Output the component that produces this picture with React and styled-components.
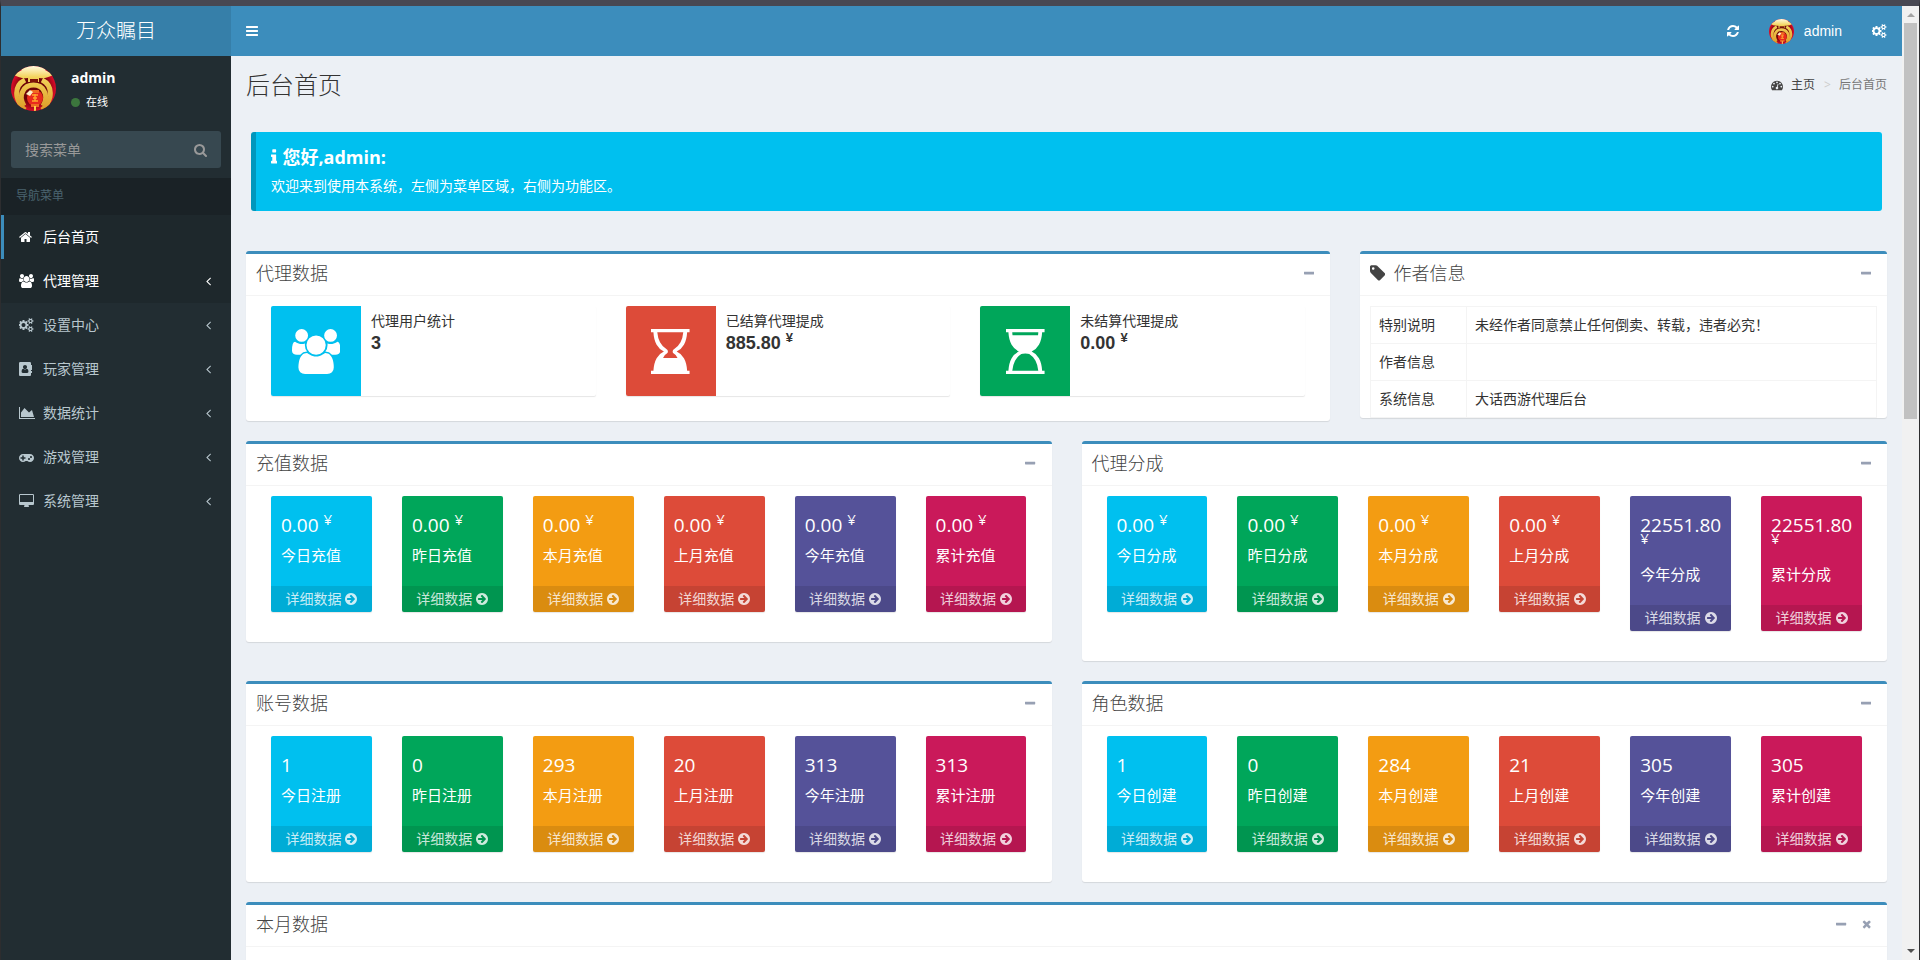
import React from 'react';
import styled, { createGlobalStyle, css } from 'styled-components';

const GlobalStyle = createGlobalStyle`
  * {
    box-sizing: border-box;
  }
  body {
    margin: 0;
    background: #222d32;
    color: #333333;
    font-family: 'Open Sans', 'Noto Sans CJK SC', sans-serif;
    font-size: 14px;
    line-height: 20px;
  }
  h1, h3, h4, p, ul, ol {
    margin: 0;
    padding: 0;
    font-weight: 400;
  }
  a {
    color: inherit;
    text-decoration: none;
  }
  button {
    padding: 0;
    border: 0;
    background: none;
    color: inherit;
    font: inherit;
    cursor: pointer;
  }
`;

const colors = {
  aqua: '#00c0ef',
  green: '#00a65a',
  yellow: '#f39c12',
  red: '#dd4b39',
  purple: '#555299',
  maroon: '#ca195a',
};

/* name: [left edge, width, path], all on a 1792 high canvas */
const glyphs = {
  bars: [
    128,
    1536,
    'M1664 1344v128q0 26-19 45t-45 19h-1408q-26 0-45-19t-19-45v-128q0-26 19-45t45-19h1408q26 0 45 19t19 45zm0-512v128q0 26-19 45t-45 19h-1408q-26 0-45-19t-19-45v-128q0-26 19-45t45-19h1408q26 0 45 19t19 45zm0-512v128q0 26-19 45t-45 19h-1408q-26 0-45-19t-19-45v-128q0-26 19-45t45-19h1408q26 0 45 19t19 45z',
  ],
  refresh: [
    128,
    1536,
    'M1639 1056q0 5-1 7-64 268-268 434.5t-478 166.5q-146 0-282.5-55t-243.5-157l-129 129q-19 19-45 19t-45-19-19-45v-448q0-26 19-45t45-19h448q26 0 45 19t19 45-19 45l-137 137q71 66 161 102t187 36q134 0 250-65t186-179q11-17 53-117 8-23 30-23h192q13 0 22.5 9.5t9.5 22.5zm25-800v448q0 26-19 45t-45 19h-448q-26 0-45-19t-19-45 19-45l138-138q-148-137-349-137-134 0-250 65t-186 179q-11 17-53 117-8 23-30 23h-199q-13 0-22.5-9.5t-9.5-22.5v-7q65-268 270-434.5t480-166.5q146 0 284 55.5t245 156.5l130-129q19-19 45-19t45 19 19 45z',
  ],
  search: [
    64,
    1664,
    'M1216 832q0-185-131.5-316.5t-316.5-131.5-316.5 131.5-131.5 316.5 131.5 316.5 316.5 131.5 316.5-131.5 131.5-316.5zm512 832q0 52-38 90t-90 38q-54 0-90-38l-343-342q-179 124-399 124-143 0-273.5-55.5t-225-150-150-225-55.5-273.5 55.5-273.5 150-225 225-150 273.5-55.5 273.5 55.5 225 150 150 225 55.5 273.5q0 220-124 399l343 343q37 37 37 90z',
  ],
  home: [
    64,
    1664,
    'M1472 992v480q0 26-19 45t-45 19h-384v-384h-256v384h-384q-26 0-45-19t-19-45v-480q0-1 .5-3t.5-3l575-474 575 474q1 2 1 6zm223-69l-62 74q-8 9-21 11h-3q-13 0-21-7l-692-577-692 577q-12 8-24 7-13-2-21-11l-62-74q-8-10-7-23.5t11-21.5l719-599q32-26 76-26t76 26l244 204v-195q0-14 9-23t23-9h192q14 0 23 9t9 23v408l219 182q10 8 11 21.5t-7 23.5z',
  ],
  users: [
    64,
    1920,
    'M657 896q-162 5-265 128h-134q-82 0-138-40.5t-56-118.5q0-353 124-353 6 0 43.5 21t97.5 42.5 119 21.5q67 0 133-23-5 37-5 66 0 159 90 256zm1071 637q0 120-73 189.5t-194 69.5h-874q-121 0-194-69.5t-73-189.5q0-53 3.5-103.5t14-109 26.5-108.5 43-97.5 62-81 85.5-53.5 111.5-20q10 0 43 21.5t73 48 107 48 135 21.5 135-21.5 107-48 73-48 43-21.5q61 0 111.5 20t85.5 53.5 62 81 43 97.5 26.5 108.5 14 109 3.5 103.5zm-1024-1277q0 106-75 181t-181 75-181-75-75-181 75-181 181-75 181 75 75 181zm704 384q0 159-112.5 271.5t-271.5 112.5-271.5-112.5-112.5-271.5 112.5-271.5 271.5-112.5 271.5 112.5 112.5 271.5zm576 225q0 78-56 118.5t-138 40.5h-134q-103-123-265-128 90-97 90-256 0-29-5-66 66 23 133 23 59 0 119-21.5t97.5-42.5 43.5-21q124 0 124 353zm-128-609q0 106-75 181t-181 75-181-75-75-181 75-181 181-75 181 75 75 181z',
  ],
  cogs: [
    0,
    1920,
    'M832 896q0-106-75-181t-181-75-181 75-75 181 75 181 181 75 181-75 75-181zm768 512q0-52-38-90t-90-38-90 38-38 90q0 53 37.5 90.5t90.5 37.5 90.5-37.5 37.5-90.5zm0-1024q0-52-38-90t-90-38-90 38-38 90q0 53 37.5 90.5t90.5 37.5 90.5-37.5 37.5-90.5zm-384 421v185q0 10-7 19.5t-16 10.5l-155 24q-11 35-32 76 34 48 90 115 7 11 7 20 0 12-7 19-23 30-82.5 89.5t-78.5 59.5q-11 0-21-7l-115-90q-37 19-77 31-11 108-23 155-7 24-30 24h-186q-11 0-20-7.5t-10-17.5l-23-153q-34-10-75-31l-118 89q-7 7-20 7-11 0-21-8-144-133-144-160 0-9 7-19 10-14 41-53t47-61q-23-44-35-82l-152-24q-10-1-17-9.5t-7-19.5v-185q0-10 7-19.5t16-10.5l155-24q11-35 32-76-34-48-90-115-7-11-7-20 0-12 7-20 22-30 82-89t79-59q11 0 21 7l115 90q34-18 77-32 11-108 23-154 7-24 30-24h186q11 0 20 7.5t10 17.5l23 153q34 10 75 31l118-89q8-7 20-7 11 0 21 8 144 133 144 160 0 8-7 19-12 16-42 54t-45 60q23 48 34 82l152 23q10 2 17 10.5t7 19.5zm640 533v140q0 16-149 31-12 27-30 52 51 113 51 138 0 4-4 7-122 71-124 71-8 0-46-47t-52-68q-20 2-30 2t-30-2q-14 21-52 68t-46 47q-2 0-124-71-4-3-4-7 0-25 51-138-18-25-30-52-149-15-149-31v-140q0-16 149-31 13-29 30-52-51-113-51-138 0-4 4-7 4-2 35-20t59-34 30-16q8 0 46 46.5t52 67.5q20-2 30-2t30 2q51-71 92-112l6-2q4 0 124 70 4 3 4 7 0 25-51 138 17 23 30 52 149 15 149 31zm0-1024v140q0 16-149 31-12 27-30 52 51 113 51 138 0 4-4 7-122 71-124 71-8 0-46-47t-52-68q-20 2-30 2t-30-2q-14 21-52 68t-46 47q-2 0-124-71-4-3-4-7 0-25 51-138-18-25-30-52-149-15-149-31v-140q0-16 149-31 13-29 30-52-51-113-51-138 0-4 4-7 4-2 35-20t59-34 30-16q8 0 46 46.5t52 67.5q20-2 30-2t30 2q51-71 92-112l6-2q4 0 124 70 4 3 4 7 0 25-51 138 17 23 30 52 149 15 149 31z',
  ],
  book: [
    0,
    1792,
    'M1028 644q0 107-76.5 183t-183.5 76-183.5-76-76.5-183q0-108 76.5-184t183.5-76 183.5 76 76.5 184zm-48 220q46 0 82.5 17t60 47.5 39.5 67 24 81 11.5 82.5 3.5 79q0 67-39.5 118.5t-105.5 51.5h-576q-66 0-105.5-51.5t-39.5-118.5q0-48 4.5-93.5t18.5-98.5 36.5-91.5 63-64.5 93.5-26h5q7 4 32 19.5t35.5 21 33 17 37 16 35 9 39.5 4.5 39.5-4.5 35-9 37-16 33-17 35.5-21 32-19.5zm684-256q0 13-9.5 22.5t-22.5 9.5h-96v128h96q13 0 22.5 9.5t9.5 22.5v192q0 13-9.5 22.5t-22.5 9.5h-96v128h96q13 0 22.5 9.5t9.5 22.5v192q0 13-9.5 22.5t-22.5 9.5h-96v224q0 66-47 113t-113 47h-1216q-66 0-113-47t-47-113v-1472q0-66 47-113t113-47h1216q66 0 113 47t47 113v224h96q13 0 22.5 9.5t9.5 22.5v192q0 13-9.5 22.5t-22.5 9.5h-96v128h96q13 0 22.5 9.5t9.5 22.5z',
  ],
  chart: [0, 2048, 'M2048 1536v128h-2048v-1536h128v1408h1920zm-384-1024l256 896h-1664v-576l448-576 576 576z'],
  gamepad: [
    0,
    1920,
    'M832 1088v-128q0-14-9-23t-23-9h-192v-192q0-14-9-23t-23-9h-128q-14 0-23 9t-9 23v192h-192q-14 0-23 9t-9 23v128q0 14 9 23t23 9h192v192q0 14 9 23t23 9h128q14 0 23-9t9-23v-192h192q14 0 23-9t9-23zm576 64q0-53-37.5-90.5t-90.5-37.5-90.5 37.5-37.5 90.5 37.5 90.5 90.5 37.5 90.5-37.5 37.5-90.5zm256-256q0-53-37.5-90.5t-90.5-37.5-90.5 37.5-37.5 90.5 37.5 90.5 90.5 37.5 90.5-37.5 37.5-90.5zm256 128q0 212-150 362t-362 150q-192 0-338-128h-220q-146 128-338 128-212 0-362-150t-150-362 150-362 362-150h896q212 0 362 150t150 362z',
  ],
  desktop: [
    0,
    1920,
    'M1792 992v-832q0-13-9.5-22.5t-22.5-9.5h-1600q-13 0-22.5 9.5t-9.5 22.5v832q0 13 9.5 22.5t22.5 9.5h1600q13 0 22.5-9.5t9.5-22.5zm128-832v1088q0 66-47 113t-113 47h-544q0 37 16 77.5t32 71 16 43.5q0 26-19 45t-45 19h-512q-26 0-45-19t-19-45q0-14 16-44t32-70 16-78h-544q-66 0-113-47t-47-113v-1088q0-66 47-113t113-47h1600q66 0 113 47t47 113z',
  ],
  dashboard: [
    0,
    1792,
    'M384 1152q0-53-37.5-90.5t-90.5-37.5-90.5 37.5-37.5 90.5 37.5 90.5 90.5 37.5 90.5-37.5 37.5-90.5zm192-448q0-53-37.5-90.5t-90.5-37.5-90.5 37.5-37.5 90.5 37.5 90.5 90.5 37.5 90.5-37.5 37.5-90.5zm428 481l101-382q6-26-7.5-48.5t-38.5-29.5-48 6.5-30 39.5l-101 382q-60 5-107 43.5t-63 98.5q-20 77 20 146t117 89 146-20 89-117q16-60-6-117t-72-91zm660-33q0-53-37.5-90.5t-90.5-37.5-90.5 37.5-37.5 90.5 37.5 90.5 90.5 37.5 90.5-37.5 37.5-90.5zm-640-640q0-53-37.5-90.5t-90.5-37.5-90.5 37.5-37.5 90.5 37.5 90.5 90.5 37.5 90.5-37.5 37.5-90.5zm448 192q0-53-37.5-90.5t-90.5-37.5-90.5 37.5-37.5 90.5 37.5 90.5 90.5 37.5 90.5-37.5 37.5-90.5zm320 448q0 261-141 483-19 29-54 29h-1402q-35 0-54-29-141-221-141-483 0-182 71-348t191-286 286-191 348-71 348 71 286 191 191 286 71 348z',
  ],
  info: [
    576,
    640,
    'M1216 1344v128q0 26-19 45t-45 19h-512q-26 0-45-19t-19-45v-128q0-26 19-45t45-19h64v-384h-64q-26 0-45-19t-19-45v-128q0-26 19-45t45-19h384q26 0 45 19t19 45v576h64q26 0 45 19t19 45zm-128-1152v192q0 26-19 45t-45 19h-256q-26 0-45-19t-19-45v-192q0-26 19-45t45-19h256q26 0 45 19t19 45z',
  ],
  tag: [
    128,
    1536,
    'M576 448q0-53-37.5-90.5t-90.5-37.5-90.5 37.5-37.5 90.5 37.5 90.5 90.5 37.5 90.5-37.5 37.5-90.5zm1067 576q0 53-37 90l-491 492q-39 37-91 37-53 0-90-37l-715-716q-38-37-64.5-101t-26.5-117v-416q0-52 38-90t90-38h416q53 0 117 26.5t102 64.5l715 714q37 39 37 91z',
  ],
  minus: [
    192,
    1408,
    'M1600 736v192q0 40-28 68t-68 28h-1216q-40 0-68-28t-28-68v-192q0-40 28-68t68-28h1216q40 0 68 28t28 68z',
  ],
  times: [
    192,
    1408,
    'M1490 1322q0 40-28 68l-136 136q-28 28-68 28t-68-28l-294-294-294 294q-28 28-68 28t-68-28l-136-136q-28-28-28-68t28-68l294-294-294-294q-28-28-28-68t28-68l136-136q28-28 68-28t68 28l294 294 294-294q28-28 68-28t68 28l136 136q28 28 28 68t-28 68l-294 294 294 294q28 28 28 68z',
  ],
  arrow: [
    128,
    1536,
    'M1413 896q0-27-18-45l-91-91-362-362q-18-18-45-18t-45 18l-91 91q-18 18-18 45t18 45l189 189h-502q-26 0-45 19t-19 45v128q0 26 19 45t45 19h502l-189 189q-18 18-18 45t18 45l91 91q18 18 45 18t45-18l362-362 91-91q18-18 18-45zm251 0q0 209-103 385.5t-279.5 279.5-385.5 103-385.5-103-279.5-279.5-103-385.5 103-385.5 279.5-279.5 385.5-103 385.5 103 279.5 279.5 103 385.5z',
  ],
  angleLeft: [
    576,
    640,
    'M1203 544q0 13-10 23l-393 393 393 393q10 10 10 23t-10 23l-50 50q-10 10-23 10t-23-10l-466-466q-10-10-10-23t10-23l466-466q10-10 23-10t23 10l50 50q10 10 10 23z',
  ],
  hourglassEnd: [
    0,
    1536,
    'M0 0h1536v128h-96q-20 310-128 500t-290 268q182 78 290 268t128 500h96v128h-1536v-128h96q20-310 128-500t290-268q-182-78-290-268t-128-500h-96zM250 128q20 230 110 400t250 266q64 36 64 102q0 50-44 82q-80 40-150 174h576q-70-134-150-174q-44-32-44-82q0-66 64-102q160-96 250-266t110-400z',
  ],
  hourglassStart: [
    0,
    1536,
    'M0 0h1536v128h-96q-20 310-128 500t-290 268q182 78 290 268t128 500h96v128h-1536v-128h96q20-310 128-500t290-268q-182-78-290-268t-128-500h-96zM250 128q2 64 10 120h1016q8-56 10-120zM250 1664h1036q-20-230-110-400t-250-266q-50-26-158-26t-158 26q-160 96-250 266t-110 400z',
  ],
};

const Icon = ({ name, size = 14 }) => {
  const [left, width, d] = glyphs[name];
  return (
    <svg
      viewBox={`${left} 0 ${width} 1792`}
      width={(size * width) / 1792}
      height={size}
      fill="currentColor"
      fillRule="evenodd"
      aria-hidden="true"
    >
      <path d={d} />
    </svg>
  );
};

const Avatar = ({ size, id }) => (
  <svg viewBox="0 0 45 45" width={size} height={size} aria-hidden="true">
    <defs>
      <linearGradient id={`gold${id}`} x1="0" y1="0" x2="0" y2="45" gradientUnits="userSpaceOnUse">
        <stop offset="0" stopColor="#fffbe0" />
        <stop offset="0.25" stopColor="#f3d35a" />
        <stop offset="1" stopColor="#dc9a26" />
      </linearGradient>
      <radialGradient id={`red${id}`}>
        <stop offset="0.6" stopColor="#6d0407" />
        <stop offset="1" stopColor="#e00b2a" />
      </radialGradient>
      <clipPath id={`clip${id}`}>
        <circle cx="22.5" cy="22.5" r="22.5" />
      </clipPath>
    </defs>
    <g clipPath={`url(#clip${id})`}>
      <rect width="45" height="45" fill={`url(#red${id})`} />
      <path d="M8 0h29l-3 4q4 3 10 4-8 5-16 4v4H17v-4Q9 13 1 8q6-1 10-4z" fill={`url(#gold${id})`} />
      <path d="M19 13h8v3h-8z" fill="#7d1207" />
      <path d="M14 14Q4 19 6 31q2 8 8 13M31 14q10 5 8 17-2 8-8 13" fill="none" stroke={`url(#gold${id})`} strokeWidth="5" />
      <path d="M13 40Q8 31 12 25q3-6 10.500-6T33 25q4 6-1 15" fill="none" stroke={`url(#gold${id})`} strokeWidth="5" />
      <circle cx="24" cy="32" r="8" fill="#e92a1d" />
      <path d="M20 24h8v3h-8zM20 38h8v3h-8z" fill="#ef6a21" />
      <path d="M15 28l4-4 3 2-3 4z" fill="#fff1c7" />
      <path d="M21 29h6M24 28v7M21 35h6M22 32h4" stroke="#ffa72e" strokeWidth="1.5" />
      <path d="M24 40v5" stroke="#ffd04c" strokeWidth="2" />
    </g>
  </svg>
);

const Frame = styled.div`
  display: flex;
  height: 100vh;
  overflow: hidden;
  border-top: 6px solid #484852;
  border-left: 1px solid #2d2d2f;
  border-right: 1px solid #2d2d2f;
`;

const Sidebar = styled.aside`
  flex: none;
  width: 230px;
  background: #222d32;
  color: #ffffff;
`;

const Logo = styled.a`
  display: block;
  height: 50px;
  background: #367fa9;
  font-size: 20px;
  font-weight: 300;
  line-height: 50px;
  text-align: center;
`;

const UserPanel = styled.div`
  display: flex;
  gap: 15px;
  height: 65px;
  padding: 10px;
  svg {
    flex: none;
  }
`;

const UserName = styled.p`
  margin-top: 2px;
  font-weight: 700;
`;

const UserStatus = styled.a`
  display: flex;
  align-items: center;
  gap: 6px;
  margin-top: 4px;
  font-size: 11px;
  &::before {
    content: '';
    width: 9px;
    height: 9px;
    border-radius: 50%;
    background: #3c763d;
  }
`;

const SearchForm = styled.form`
  display: flex;
  height: 37px;
  margin: 10px;
  border-radius: 3px;
  background: #374850;
  color: #999999;
`;

const SearchInput = styled.input`
  flex: 1;
  min-width: 0;
  padding: 0 14px;
  border: 0;
  outline: 0;
  background: transparent;
  color: #ffffff;
  font: inherit;
  &::placeholder {
    color: #999999;
    opacity: 1;
  }
`;

const SearchButton = styled.button`
  display: flex;
  align-items: center;
  padding: 0 14px;
`;

const MenuHeader = styled.p`
  padding: 8px 15px 9px;
  background: #1a2226;
  color: #4b646f;
  font-size: 12px;
`;

const MenuItem = styled.a`
  display: flex;
  align-items: center;
  height: 44px;
  padding: 0 20px 0 15px;
  border-left: 3px solid transparent;
  color: #b8c7ce;
  ${({ $lit }) =>
    $lit &&
    css`
      background: #1e282c;
      color: #ffffff;
    `}
  ${({ $active }) =>
    $active &&
    css`
      border-left-color: #3c8dbc;
    `}
`;

const MenuIcon = styled.span`
  display: flex;
  flex: 0 0 24px;
`;

const MenuLabel = styled.span`
  flex: 1;
`;

const Main = styled.div`
  flex: 1;
  min-width: 0;
  overflow: hidden;
  background: #ecf0f5;
`;

const Navbar = styled.header`
  display: flex;
  align-items: center;
  justify-content: space-between;
  height: 50px;
  padding: 0 15px;
  background: #3c8dbc;
  color: #ffffff;
`;

const NavButton = styled.button`
  display: flex;
`;

const NavRight = styled.div`
  display: flex;
  align-items: center;
  gap: 30px;
`;

const NavUser = styled.a`
  display: flex;
  align-items: center;
  gap: 10px;
  font-family: 'Liberation Sans', Arial, sans-serif;
`;

const PageHeader = styled.div`
  display: flex;
  align-items: center;
  justify-content: space-between;
  padding: 15px 15px 0;
`;

const PageTitle = styled.h1`
  font-size: 24px;
  font-weight: 300;
  line-height: 28px;
`;

const Breadcrumb = styled.ol`
  display: flex;
  align-items: center;
  gap: 9px;
  color: #777777;
  font-size: 12px;
  list-style: none;
  a {
    display: flex;
    align-items: center;
    gap: 8px;
    color: #444444;
  }
  li + li::before {
    content: '>';
    padding-right: 8px;
    color: #cccccc;
  }
`;

const Content = styled.main`
  padding: 33px 15px 0;
`;

const Callout = styled.div`
  margin: 0 5px 40px;
  padding: 15px 30px 15px 15px;
  border-left: 5px solid #0097bc;
  border-radius: 3px;
  background: #00c0ef;
  color: #ffffff;
`;

const CalloutTitle = styled.h4`
  display: flex;
  align-items: center;
  gap: 5px;
  margin-bottom: 9px;
  font-size: 18px;
  font-weight: 700;
`;

const Row = styled.div`
  display: grid;
  grid-template-columns: repeat(12, minmax(0, 1fr));
  column-gap: 30px;
  align-items: start;
`;

const Box = styled.section`
  grid-column: span ${({ $span }) => $span};
  margin-bottom: 20px;
  border-top: 3px solid #3c8dbc;
  border-radius: 3px;
  background: #ffffff;
  box-shadow: 0 1px 1px rgba(0, 0, 0, 0.1);
`;

const BoxHeader = styled.header`
  display: flex;
  align-items: center;
  height: 42px;
  padding: 0 16px 3px 10px;
  border-bottom: 1px solid #f4f4f4;
  color: #444444;
`;

const BoxTitle = styled.h3`
  display: flex;
  flex: 1;
  align-items: center;
  gap: 8px;
  font-size: 18px;
  font-weight: 300;
`;

const BoxTools = styled.div`
  display: flex;
  gap: 15px;
  color: #97a0b3;
`;

const ToolButton = styled.button`
  display: flex;
`;

const BoxBody = styled.div`
  padding: 10px 10px ${({ $flush }) => ($flush ? 0 : 10)}px;
`;

const Tiles = styled.div`
  display: grid;
  grid-template-columns: repeat(${({ $count }) => $count}, minmax(0, 1fr));
  column-gap: 30px;
  align-items: start;
  padding: 0 15px;
`;

const InfoBox = styled.div`
  display: flex;
  gap: 10px;
  margin-bottom: 15px;
  border-radius: 2px;
  box-shadow: 0 1px 1px rgba(0, 0, 0, 0.1);
`;

const InfoIcon = styled.span`
  display: flex;
  align-items: center;
  justify-content: center;
  width: 90px;
  height: 90px;
  border-radius: 2px 0 0 2px;
  background: ${({ $color }) => colors[$color]};
  color: #ffffff;
`;

const InfoText = styled.div`
  padding-top: 5px;
`;

const InfoNumber = styled.p`
  font-family: 'Liberation Sans', Arial, sans-serif;
  font-size: 18px;
  font-weight: 700;
  line-height: 24px;
`;

const Yen = styled.sup`
  font-size: ${({ $size }) => $size}px;
  line-height: 0;
  vertical-align: 7px;
`;

const SmallBox = styled.div`
  margin-bottom: 20px;
  border-radius: 2px;
  background: ${({ $color }) => colors[$color]};
  box-shadow: 0 1px 1px rgba(0, 0, 0, 0.1);
  color: #ffffff;
`;

const SmallInner = styled.div`
  padding: 20px 10px 21px;
`;

const SmallNumber = styled.h3`
  margin-bottom: 10px;
  font-size: 19px;
  line-height: 19px;
`;

const SmallLabel = styled.p`
  font-size: 15px;
`;

const SmallFooter = styled.a`
  display: flex;
  align-items: center;
  justify-content: center;
  gap: 4px;
  height: 26px;
  border-radius: 0 0 2px 2px;
  background: rgba(0, 0, 0, 0.1);
  color: rgba(255, 255, 255, 0.8);
`;

const InfoTable = styled.table`
  width: 100%;
  border-collapse: collapse;
  th,
  td {
    height: 37px;
    padding: 8px;
    border: 1px solid #f4f4f4;
    font-weight: 400;
    text-align: left;
  }
  th {
    width: 96px;
  }
`;

const Scrollbar = styled.div`
  display: flex;
  flex: 0 0 17px;
  flex-direction: column;
  align-items: center;
  justify-content: space-between;
  padding: 7px 0;
  background: #f1f1f1;
`;

const ScrollArrow = styled.span`
  border: 4px solid transparent;
  border-top-width: 0;
  border-bottom-color: #a3a3a3;
  ${({ $down }) =>
    $down &&
    css`
      border-top: 4px solid #505050;
      border-bottom-width: 0;
    `}
`;

const ScrollTrack = styled.div`
  flex: 1;
  width: 13px;
  margin: 6px 0;
`;

const ScrollThumb = styled.div`
  height: 43%;
  background: #c1c1c1;
`;

const menu = [
  { icon: 'home', label: '后台首页', active: true, lit: true, leaf: true },
  { icon: 'users', label: '代理管理', lit: true },
  { icon: 'cogs', label: '设置中心' },
  { icon: 'book', label: '玩家管理' },
  { icon: 'chart', label: '数据统计' },
  { icon: 'gamepad', label: '游戏管理' },
  { icon: 'desktop', label: '系统管理' },
];

const agents = [
  { icon: 'users', color: 'aqua', label: '代理用户统计', value: '3' },
  { icon: 'hourglassEnd', color: 'red', label: '已结算代理提成', value: '885.80', money: true },
  { icon: 'hourglassStart', color: 'green', label: '未结算代理提成', value: '0.00', money: true },
];

const about = [
  ['特别说明', '未经作者同意禁止任何倒卖、转载，违者必究！'],
  ['作者信息', ''],
  ['系统信息', '大话西游代理后台'],
];

const periods = ['今日', '昨日', '本月', '上月', '今年', '累计'];

const stats = [
  { title: '充值数据', unit: '充值', money: true, values: ['0.00', '0.00', '0.00', '0.00', '0.00', '0.00'] },
  { title: '代理分成', unit: '分成', money: true, values: ['0.00', '0.00', '0.00', '0.00', '22551.80', '22551.80'] },
  { title: '账号数据', unit: '注册', values: ['1', '0', '293', '20', '313', '313'] },
  { title: '角色数据', unit: '创建', values: ['1', '0', '284', '21', '305', '305'] },
];

const Panel = ({ title, icon, span, closable, flush, children }) => (
  <Box $span={span}>
    <BoxHeader>
      <BoxTitle>
        {icon && <Icon name={icon} size={18} />}
        {title}
      </BoxTitle>
      <BoxTools>
        <ToolButton type="button" aria-label="收起">
          <Icon name="minus" size={13} />
        </ToolButton>
        {closable && (
          <ToolButton type="button" aria-label="关闭">
            <Icon name="times" size={12} />
          </ToolButton>
        )}
      </BoxTools>
    </BoxHeader>
    <BoxBody $flush={flush}>{children}</BoxBody>
  </Box>
);

const App = () => (
  <>
    <GlobalStyle />
    <Frame>
      <Sidebar>
        <Logo href="#">万众瞩目</Logo>
        <UserPanel>
          <Avatar size={45} id="side" />
          <div>
            <UserName>admin</UserName>
            <UserStatus href="#">在线</UserStatus>
          </div>
        </UserPanel>
        <SearchForm>
          <SearchInput type="text" placeholder="搜索菜单" aria-label="搜索菜单" />
          <SearchButton type="button" aria-label="搜索">
            <Icon name="search" />
          </SearchButton>
        </SearchForm>
        <nav>
          <MenuHeader>导航菜单</MenuHeader>
          {menu.map(({ icon, label, active, lit, leaf }) => (
            <MenuItem href="#" key={label} $active={active} $lit={lit}>
              <MenuIcon>
                <Icon name={icon} />
              </MenuIcon>
              <MenuLabel>{label}</MenuLabel>
              {!leaf && <Icon name="angleLeft" />}
            </MenuItem>
          ))}
        </nav>
      </Sidebar>
      <Main>
        <Navbar>
          <NavButton type="button" aria-label="切换菜单">
            <Icon name="bars" />
          </NavButton>
          <NavRight>
            <NavButton type="button" aria-label="刷新">
              <Icon name="refresh" />
            </NavButton>
            <NavUser href="#">
              <Avatar size={25} id="nav" />
              admin
            </NavUser>
            <NavButton type="button" aria-label="设置">
              <Icon name="cogs" />
            </NavButton>
          </NavRight>
        </Navbar>
        <PageHeader>
          <PageTitle>后台首页</PageTitle>
          <Breadcrumb>
            <li>
              <a href="#">
                <Icon name="dashboard" size={12} />
                主页
              </a>
            </li>
            <li>后台首页</li>
          </Breadcrumb>
        </PageHeader>
        <Content>
          <Callout>
            <CalloutTitle>
              <Icon name="info" size={18} />
              您好,admin:
            </CalloutTitle>
            <p>欢迎来到使用本系统，左侧为菜单区域，右侧为功能区。</p>
          </Callout>
          <Row>
            <Panel title="代理数据" span={8}>
              <Tiles $count={3}>
                {agents.map(({ icon, color, label, value, money }) => (
                  <InfoBox key={label}>
                    <InfoIcon $color={color}>
                      <Icon name={icon} size={45} />
                    </InfoIcon>
                    <InfoText>
                      <p>{label}</p>
                      <InfoNumber>
                        {value} {money && <Yen $size={13}>¥</Yen>}
                      </InfoNumber>
                    </InfoText>
                  </InfoBox>
                ))}
              </Tiles>
            </Panel>
            <Panel title="作者信息" icon="tag" span={4} flush>
              <InfoTable>
                <tbody>
                  {about.map(([name, text]) => (
                    <tr key={name}>
                      <th scope="row">{name}</th>
                      <td>{text}</td>
                    </tr>
                  ))}
                </tbody>
              </InfoTable>
            </Panel>
          </Row>
          <Row>
            {stats.map(({ title, unit, money, values }) => (
              <Panel title={title} span={6} key={title}>
                <Tiles $count={6}>
                  {values.map((value, i) => (
                    <SmallBox key={periods[i]} $color={Object.keys(colors)[i]}>
                      <SmallInner>
                        <SmallNumber>
                          {value} {money && <Yen $size={15}>¥</Yen>}
                        </SmallNumber>
                        <SmallLabel>
                          {periods[i]}
                          {unit}
                        </SmallLabel>
                      </SmallInner>
                      <SmallFooter href="#">
                        详细数据
                        <Icon name="arrow" />
                      </SmallFooter>
                    </SmallBox>
                  ))}
                </Tiles>
              </Panel>
            ))}
          </Row>
          <Row>
            <Panel title="本月数据" span={12} closable />
          </Row>
        </Content>
      </Main>
      <Scrollbar aria-hidden="true">
        <ScrollArrow />
        <ScrollTrack>
          <ScrollThumb />
        </ScrollTrack>
        <ScrollArrow $down />
      </Scrollbar>
    </Frame>
  </>
);

export default App;
